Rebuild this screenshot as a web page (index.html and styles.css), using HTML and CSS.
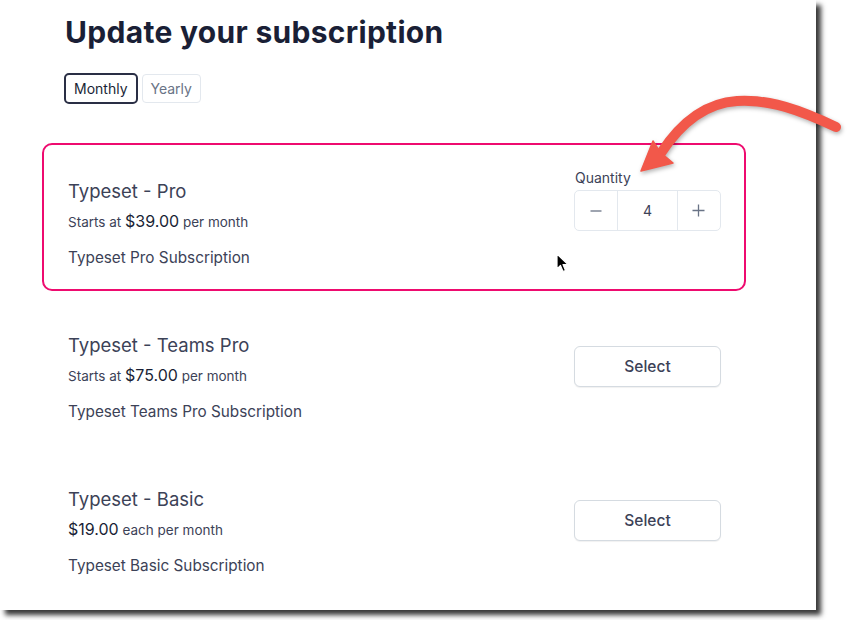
FILE: index.html
```html
<!DOCTYPE html>
<html>
<head>
<meta charset="utf-8">
<link rel="stylesheet" href="styles.css">
</head>
<body>
<div class="stage">
  <div class="panel">
    <header class="head">
      <h1 class="title">Update your subscription</h1>
      <div class="toggle">
        <button class="tab tab-active">Monthly</button>
        <button class="tab">Yearly</button>
      </div>
    </header>
    <div class="plans">
      <div class="plan plan-selected">
        <div class="plan-info">
          <div class="plan-name">Typeset - Pro</div>
          <div class="plan-price"><span class="muted">Starts at </span><span class="amount">$39.00</span><span class="muted"> per month</span></div>
          <div class="plan-desc">Typeset Pro Subscription</div>
        </div>
        <div class="plan-action">
          <div class="qty-label">Quantity</div>
          <div class="stepper">
            <div class="step-btn"><svg width="12" height="12" viewBox="0 0 12 12"><path d="M0.5 6h11" stroke="#697386" stroke-width="1.3"/></svg></div>
            <div class="step-val">4</div>
            <div class="step-btn"><svg width="13" height="13" viewBox="0 0 13 13"><path d="M0.5 6.5h12M6.5 0.5v12" stroke="#697386" stroke-width="1.3"/></svg></div>
          </div>
        </div>
      </div>
      <div class="plan">
        <div class="plan-info">
          <div class="plan-name">Typeset - Teams Pro</div>
          <div class="plan-price"><span class="muted">Starts at </span><span class="amount">$75.00</span><span class="muted"> per month</span></div>
          <div class="plan-desc">Typeset Teams Pro Subscription</div>
        </div>
        <div class="plan-action plan-action-center">
          <button class="select-btn">Select</button>
        </div>
      </div>
      <div class="plan">
        <div class="plan-info">
          <div class="plan-name">Typeset - Basic</div>
          <div class="plan-price"><span class="amount">$19.00</span><span class="muted"> each per month</span></div>
          <div class="plan-desc">Typeset Basic Subscription</div>
        </div>
        <div class="plan-action plan-action-center">
          <button class="select-btn">Select</button>
        </div>
      </div>
    </div>
  </div>
  <svg class="arrow" width="852" height="620" viewBox="0 0 852 620">
    <path d="M836 127 C800 110 770 99 737 101 C705 103 680 124 661 153" fill="none" stroke="#f2584a" stroke-width="10" stroke-linecap="round"/>
    <path d="M641 171 L653 141 L660 152 L673 163 Z" fill="#f2584a" stroke="#f2584a" stroke-width="1.5" stroke-linejoin="round"/>
  </svg>
  <svg class="cursor" width="14" height="20" viewBox="0 0 14 20">
    <path d="M1 1 L1 16 L4.5 12.5 L7 18.5 L9.5 17.5 L7 11.5 L12 11.5 Z" fill="#000" stroke="#fff" stroke-width="1.2" stroke-linejoin="round"/>
  </svg>
</div>
</body>
</html>
```

FILE: styles.css
```css
html, body {
  margin: 0;
  padding: 0;
  background: #ffffff;
}

body {
  font-family: Inter, "Noto Sans", "Liberation Sans", sans-serif;
  color: #3c4257;
}

.stage {
  position: relative;
  width: 852px;
  height: 620px;
  overflow: hidden;
}

.panel {
  width: 816px;
  height: 610px;
  background: #ffffff;
  box-shadow: 5px 5px 5px rgba(0, 0, 0, 0.78);
  box-sizing: border-box;
  padding: 14px 0 0 42px;
}

.head {
  padding-left: 22px;
}

.title {
  margin: 0 0 0 1px;
  font-size: 30px;
  line-height: 36px;
  font-weight: 700;
  color: #1a1f36;
  letter-spacing: 0.3px;
}

.toggle {
  display: flex;
  align-items: center;
  gap: 4px;
  margin-top: 23px;
}

.tab {
  font-family: inherit;
  font-size: 14px;
  line-height: 18px;
  background: #fff;
  color: #697386;
  border: 1px solid #e3e8ee;
  border-radius: 4px;
  padding: 5px 8px;
  height: 29px;
  margin: 0;
}

.tab-active {
  border: 2px solid #2a2f45;
  border-radius: 5px;
  color: #1a1f36;
  height: 31px;
  padding: 5px 8px;
}

.plans {
  margin-top: 39px;
  display: flex;
  flex-direction: column;
  gap: 6px;
  width: 704px;
}

.plan {
  height: 148px;
  box-sizing: border-box;
  border: 2px solid transparent;
  border-radius: 10px;
  padding: 32px 23px 0 24px;
  display: flex;
  justify-content: space-between;
}

.plan-selected {
  border-color: #ee0b6f;
}

.plan-name {
  font-size: 18.5px;
  line-height: 28px;
  color: #3c4257;
}

.plan-price {
  font-size: 13.5px;
  line-height: 20px;
  margin-top: 6px;
  color: #3c4257;
}

.amount {
  font-size: 16px;
  color: #1a1f36;
}

.plan-desc {
  font-size: 15.3px;
  line-height: 22px;
  margin-top: 15px;
}

.plan-action {
  width: 147px;
  margin-top: -9px;
}

.plan-action-center {
  margin-top: 15px;
}

.qty-label {
  font-size: 14px;
  line-height: 20px;
  color: #3c4257;
  padding-left: 1px;
}

.stepper {
  margin-top: 2px;
  display: flex;
  height: 41px;
  box-sizing: border-box;
  border: 1px solid #e3e8ee;
  border-radius: 5px;
}

.step-btn {
  width: 43px;
  display: flex;
  align-items: center;
  justify-content: center;
}

.step-val {
  width: 59px;
  border-left: 1px solid #e3e8ee;
  border-right: 1px solid #e3e8ee;
  display: flex;
  align-items: center;
  justify-content: center;
  font-size: 14px;
  color: #3c4257;
}

.select-btn {
  width: 147px;
  height: 41px;
  font-family: inherit;
  font-size: 15.5px;
  font-weight: 500;
  color: #3c4257;
  background: #fff;
  border: 1px solid #d5dbe1;
  border-radius: 6px;
  box-shadow: 0 1px 1px rgba(0, 0, 0, 0.06);
  margin: 0;
}

.arrow {
  position: absolute;
  left: 0;
  top: 0;
  filter: drop-shadow(1px 2px 2px rgba(0, 0, 0, 0.3));
  pointer-events: none;
}

.cursor {
  position: absolute;
  left: 556px;
  top: 253px;
}
```
